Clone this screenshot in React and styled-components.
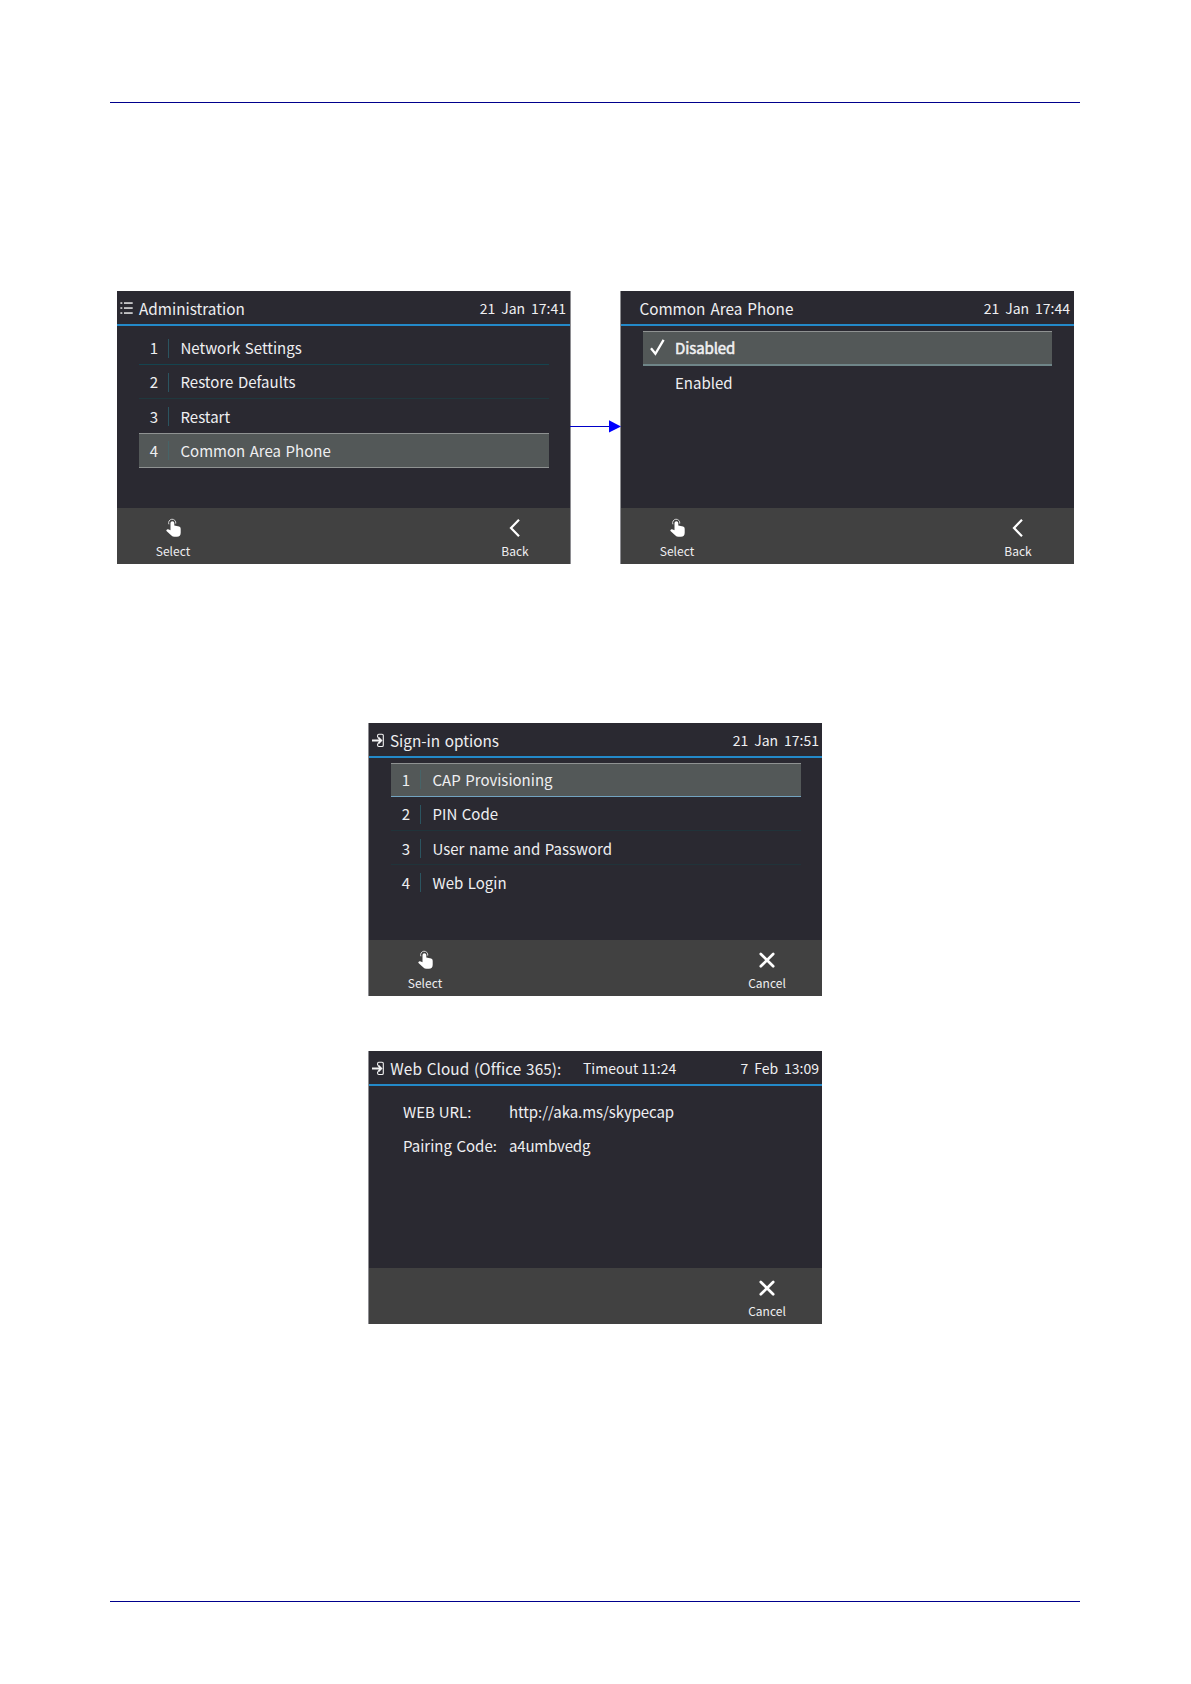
import React from "react";
import styled, { createGlobalStyle, css } from "styled-components";

const GlobalStyle = createGlobalStyle`
  * { box-sizing: border-box; }
  html, body { margin: 0; background: #ffffff; }
  body { font-family: "Noto Sans CJK SC", "Noto Sans", sans-serif; }
`;

const Page = styled.main`
  width: 1191px;
  height: 1684px;
  padding: 102px 111px 82px 110px;
  display: flex;
  flex-direction: column;
  align-items: center;
  background: #ffffff;
  overflow: hidden;
`;

const Rule = styled.hr`
  flex: none;
  width: 970px;
  height: 1px;
  margin: ${(p) => (p.$bottom ? "auto 0 0" : "0")};
  border: 0;
  background: #00008c;
`;

const Flow = styled.section`
  flex: none;
  display: flex;
  align-items: flex-start;
  width: 956px;
  margin-top: 188px;
`;

const Arrow = styled.svg`
  flex: none;
  display: block;
  width: 51px;
  height: 14px;
  margin: 128px -1px 0;
  position: relative;
  z-index: 1;
`;

const Screen = styled.article`
  flex: none;
  width: 454px;
  height: 273px;
  margin-top: ${(p) => p.$top || 0}px;
  display: flex;
  flex-direction: column;
  background: #2a2931;
  color: #efeff1;
  ${(p) => p.$edge === "right"
    ? css`border-right: 1px solid #8e8e92;`
    : css`border-left: 1px solid #8e8e92;`}
`;

const spaced = css`
  white-space: pre;
  letter-spacing: ${(p) => p.$ls ?? 0}px;
  word-spacing: ${(p) => p.$ws ?? 1.2}px;
`;

const Header = styled.header`
  flex: none;
  display: flex;
  align-items: center;
  height: 35px;
  padding: 1px ${(p) => p.$right ?? 4}px 0 3px;
  border-bottom: 2px solid ${(p) => p.$line || "#2389c9"};
`;

const Title = styled.h1`
  margin: 0 0 0 ${(p) => p.$left}px;
  font-size: 15.3px;
  font-weight: 400;
  line-height: 24px;
  ${spaced}
`;

const Timeout = styled.span`
  margin-left: 21.5px;
  font-size: 14px;
  line-height: 24px;
  ${spaced}
`;

const Clock = styled.time`
  margin-left: auto;
  font-size: 14px;
  line-height: 24px;
  letter-spacing: 0;
  word-spacing: 2.8px;
`;

const Menu = styled.ol`
  flex: 1;
  list-style: none;
  margin: 0;
  padding: 5px ${(p) => p.$right ?? 21}px 0 22px;
`;

const Item = styled.li`
  display: flex;
  align-items: center;
  height: 34px;
  padding-top: ${(p) => p.$drop || 1}px;
  border-bottom: 1px solid ${(p) => p.$line || "transparent"};
  ${(p) => p.$selected && css`
    height: ${p.$tall ? 35 : 34}px;
    margin-bottom: ${p.$tall ? -1 : 0}px;
    padding: 0 0 ${p.$drop ? 0 : 1}px;
    background: #535858;
    border-top: 1px solid #8f9292;
    border-bottom: ${p.$thick || 1}px solid ${p.$line || "#8f9292"};
  `}
`;

const Index = styled.span`
  width: 29px;
  padding-left: 1px;
  text-align: center;
  font-size: 15px;
  line-height: 24px;
`;

const Divider = styled.span`
  width: 1px;
  height: 19px;
  background: ${(p) => (p.$dim ? "#466468" : "#2b5460")};
`;

const Label = styled.span`
  padding-left: ${(p) => p.$left ?? 11.5}px;
  font-size: 15px;
  line-height: 24px;
  ${(p) => p.$strong && css`-webkit-text-stroke: 0.5px #f3f3f4;`}
  ${spaced}
`;

const CheckSlot = styled.span`
  width: 32px;
  padding-left: 7px;
  display: flex;
`;

const Details = styled.dl`
  flex: 1;
  display: grid;
  grid-template-columns: 106px 1fr;
  grid-auto-rows: 34px;
  margin: 0;
  padding: 9px 0 0 34px;
`;

const Term = styled.dt`
  font-size: 15px;
  line-height: 34px;
  ${spaced}
`;

const Value = styled.dd`
  margin: 0;
  font-size: 15px;
  line-height: 34px;
  ${spaced}
`;

const Softkeys = styled.footer`
  flex: none;
  display: flex;
  justify-content: space-between;
  height: 56px;
  padding: 10px ${(p) => p.$right ?? 15}px 0 16px;
  background: #414141;
`;

const Softkey = styled.div`
  width: 80px;
  display: flex;
  flex-direction: column;
  align-items: center;
  font-size: 12px;
  line-height: 20px;
  svg { height: 20px; display: block; margin-bottom: 3px; }
`;

const Icon = styled.svg`
  display: block;
  flex: none;
  overflow: visible;
`;

const ListIcon = () => (
  <Icon width="13" height="12" viewBox="0 0 13 12" fill="#e9e9ea">
    {[0.3, 5.3, 10.3].map((y) => (
      <g key={y}>
        <rect x="0.4" y={y} width="1.9" height="1.5" />
        <rect x="4" y={y} width="8.7" height="1.5" />
      </g>
    ))}
  </Icon>
);

const SignInIcon = () => (
  <Icon width="12" height="14" viewBox="0 -0.5 12 14" fill="none" stroke="#f3f3f4">
    <path d="M5.6 4V2A1.2 1.2 0 0 1 6.8 .8H10A1.3 1.3 0 0 1 11.3 2.1V11.7A1.3 1.3 0 0 1 10 13H6.8A1.2 1.2 0 0 1 5.6 11.8V10" strokeWidth="1.1" />
    <path d="M0 7H9M6.2 3.9 9.3 7 6.2 10.1" strokeWidth="1.8" />
  </Icon>
);

const HandIcon = () => (
  <Icon width="15" height="18" viewBox="0 0 15 18">
    <path d="M2.9 5.3A3.6 3.6 0 1 1 9.7 4.6" fill="none" stroke="#d4d4d4" strokeWidth="1" />
    <path d="M4.5 4.1a1.9 1.9 0 0 1 3.8 0V6.6l4.8 1q1.6.5 1.6 2.2v4q0 3.9-3.8 3.9H8.4q-1.8 0-3-1.3L.2 11.7q.8-1.8 2.6-1.2l1.7.8z" fill="#fff" />
  </Icon>
);

const BackIcon = () => (
  <Icon width="12" height="20" viewBox="0 0 12 20" fill="none" stroke="#fff" strokeWidth="2.2">
    <path d="M10 1.8 2 10 10 18.2" />
  </Icon>
);

const CancelIcon = () => (
  <Icon width="16" height="20" viewBox="0 0 16 20" fill="none" stroke="#fff" strokeWidth="2.7" strokeLinecap="round">
    <path d="M1.8 4 14.2 16.2M14.2 4 1.8 16.2" />
  </Icon>
);

const CheckIcon = () => (
  <Icon width="15" height="17" viewBox="0 0 15 17" fill="none" stroke="#fff" strokeWidth="2.3">
    <path d="M1 9.2 5.4 14.8 13.6 .8" />
  </Icon>
);

const MenuItem = ({ n, children, selected, tall, drop, line, ...rest }) => (
  <Item $selected={selected} $tall={tall} $drop={drop} $line={line}>
    <Index>{n}</Index>
    <Divider $dim={selected} />
    <Label {...rest}>{children}</Label>
  </Item>
);

export default function App() {
  return (
    <>
      <GlobalStyle />
      <Page>
        <Rule />
        <Flow>
          <Screen $edge="right">
            <Header><ListIcon /><Title $left={6}>Administration</Title><Clock>21 Jan 17:41</Clock></Header>
            <Menu>
              <MenuItem n="1" line="#15444f">Network Settings</MenuItem>
              <MenuItem n="2" line="#1f383e">Restore Defaults</MenuItem>
              <MenuItem n="3" drop={2}>Restart</MenuItem>
              <MenuItem n="4" selected tall drop={1}>Common Area Phone</MenuItem>
            </Menu>
            <Softkeys>
              <Softkey><HandIcon />Select</Softkey>
              <Softkey><BackIcon />Back</Softkey>
            </Softkeys>
          </Screen>
          <Arrow viewBox="0 0 51 14"><path d="M0 7.5H40" stroke="#0000c8" /><path d="M39 1.2 51 7.5 39 13.5z" fill="#0000ff" /></Arrow>
          <Screen>
            <Header><Title $left={15.4} $ws={1.6}>Common Area Phone</Title><Clock>21 Jan 17:44</Clock></Header>
            <Menu $right={22}>
              <Item $selected $tall $thick={2} $line="#6f8588"><CheckSlot><CheckIcon /></CheckSlot><Label $left={0} $ls={-0.1} $strong>Disabled</Label></Item>
              <Item $drop={2}><CheckSlot /><Label $left={0}>Enabled</Label></Item>
            </Menu>
            <Softkeys $right={16}>
              <Softkey><HandIcon />Select</Softkey>
              <Softkey><BackIcon />Back</Softkey>
            </Softkeys>
          </Screen>
        </Flow>
        <Screen $top={159}>
          <Header $right={3}><SignInIcon /><Title $left={6}>Sign-in options</Title><Clock>21 Jan 17:51</Clock></Header>
          <Menu>
            <MenuItem n="1" selected line="#72a3c0">CAP Provisioning</MenuItem>
            <MenuItem n="2" line="#20333a">PIN Code</MenuItem>
            <MenuItem n="3" line="#20333a" drop={2}>User name and Password</MenuItem>
            <MenuItem n="4" drop={2}>Web Login</MenuItem>
          </Menu>
          <Softkeys>
            <Softkey><HandIcon />Select</Softkey>
            <Softkey><CancelIcon />Cancel</Softkey>
          </Softkeys>
        </Screen>
        <Screen $top={55}>
          <Header $right={3}><SignInIcon /><Title $left={6.3} $ls={0.1}>Web Cloud (Office 365):</Title><Timeout $ws={0}>Timeout 11:24</Timeout><Clock>7 Feb 13:09</Clock></Header>
          <Details>
            <Term $ws={0.5}>WEB URL:</Term><Value $ls={-0.08}>http://aka.ms/skypecap</Value>
            <Term>Pairing Code:</Term><Value $ls={-0.18}>a4umbvedg</Value>
          </Details>
          <Softkeys>
            <span />
            <Softkey><CancelIcon />Cancel</Softkey>
          </Softkeys>
        </Screen>
        <Rule $bottom />
      </Page>
    </>
  );
}
